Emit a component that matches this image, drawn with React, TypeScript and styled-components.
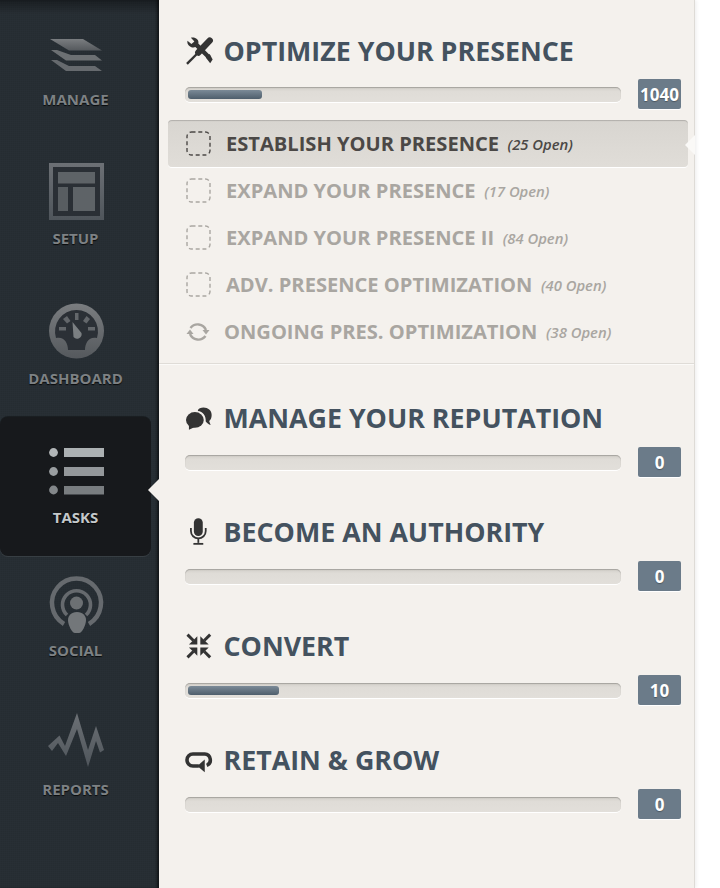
import React from "react";
import styled, { createGlobalStyle } from "styled-components";

const GlobalStyle = createGlobalStyle`
  html, body {
    margin: 0;
    padding: 0;
    background: #ffffff;
  }
  body {
    font-family: "Open Sans", "Liberation Sans", sans-serif;
  }
`;

const Page = styled.div`
  display: flex;
  width: 720px;
  height: 888px;
  overflow: hidden;
  background: #ffffff;
`;

const Sidebar = styled.nav`
  display: flex;
  flex-direction: column;
  flex: 0 0 159px;
  box-sizing: border-box;
  padding-right: 8px;
  background-color: #272e34;
  background-image:
    linear-gradient(rgba(0, 0, 0, 0.35), transparent 14px),
    repeating-linear-gradient(0deg, rgba(0, 0, 0, 0.05) 0 1px, transparent 1px 2px),
    repeating-linear-gradient(90deg, rgba(255, 255, 255, 0.008) 0 1px, transparent 1px 2px);
  box-shadow: inset -3px 0 3px -1px rgba(0, 0, 0, 0.55);
`;

type NavItemProps = {
  $height: number;
  $active?: boolean;
};

const NavItem = styled.a<NavItemProps>`
  position: relative;
  display: flex;
  flex-direction: column;
  align-items: center;
  justify-content: flex-end;
  box-sizing: border-box;
  height: ${(props) => props.$height}px;
  padding: 0 0 31px;
  gap: 1px;
  border-radius: 8px;
  background: ${(props) => (props.$active ? "#17191c" : "transparent")};
  box-shadow: ${(props) =>
    props.$active ? "0 1px 0 rgba(255,255,255,0.08), 0 -1px 0 rgba(0,0,0,0.35)" : "none"};
`;

const NavIcon = styled.svg`
  display: block;
  width: 80px;
  height: 72px;
`;

type NavLabelProps = {
  $active?: boolean;
};

const NavLabel = styled.span<NavLabelProps>`
  font-size: 15px;
  line-height: 16px;
  font-weight: 700;
  color: ${(props) => (props.$active ? "#c4c8ca" : "#7d8184")};
  text-shadow: 0 1px 1px rgba(0, 0, 0, 0.8);
`;

const NavPointer = styled.span`
  position: absolute;
  right: -8px;
  top: 62px;
  width: 0;
  height: 0;
  border-top: 11px solid transparent;
  border-bottom: 11px solid transparent;
  border-right: 11px solid #f4f1ed;
`;

const Main = styled.main`
  flex: 0 0 536px;
  box-sizing: border-box;
  background: #f4f1ed;
  border-right: 1px solid #dedbd6;
  box-shadow: 1px 0 4px rgba(0, 0, 0, 0.08);
`;

type SectionProps = {
  $top: number;
  $bottom: number;
  $divided?: boolean;
};

const Section = styled.section<SectionProps>`
  padding: ${(props) => props.$top}px 13px ${(props) => props.$bottom}px 26px;
  border-bottom: ${(props) => (props.$divided ? "1px solid #dfdcd7" : "none")};
  box-shadow: ${(props) => (props.$divided ? "0 1px 0 #fbfaf8" : "none")};
`;

const Heading = styled.h2`
  display: flex;
  align-items: center;
  height: 34px;
  margin: 0;
  font-size: 26.8px;
  line-height: 34px;
  font-weight: 700;
  color: #44525f;
`;

const HeadingIcon = styled.svg`
  flex: 0 0 38.5px;
  width: 38.5px;
  height: 34px;
  color: #333333;
`;

type ProgressRowProps = {
  $gap: number;
};

const ProgressRow = styled.div<ProgressRowProps>`
  display: flex;
  align-items: center;
  justify-content: space-between;
  margin-top: ${(props) => props.$gap}px;
`;

const Track = styled.div`
  display: flex;
  align-items: center;
  box-sizing: border-box;
  width: 436px;
  height: 15px;
  margin-top: 1px;
  padding: 0 3px;
  border-radius: 5px;
  background: linear-gradient(#d2cfc9, #dfdcd7 30%, #e2dfda);
  box-shadow: inset 0 1px 1px rgba(0, 0, 0, 0.22), 0 1px 0 #ffffff;
`;

const Fill = styled.div`
  height: 9px;
  border-radius: 3px;
  background: linear-gradient(#7b8a97, #4e5e6c);
`;

const Badge = styled.div`
  display: flex;
  align-items: center;
  justify-content: center;
  width: 43px;
  height: 30px;
  border-radius: 2px;
  background: #6b7b89;
  box-shadow: 0 1px 0 #ffffff;
  font-size: 17px;
  font-weight: 700;
  color: #ffffff;
  text-shadow: 0 1px 1px rgba(0, 0, 0, 0.3);
`;

const TaskList = styled.ul`
  list-style: none;
  margin: 11px -7px 0 -17px;
  padding: 0;
`;

type TaskRowProps = {
  $active?: boolean;
};

const TaskRow = styled.li<TaskRowProps>`
  position: relative;
  display: flex;
  align-items: center;
  box-sizing: border-box;
  height: 47px;
  padding-left: 18px;
  border-radius: 4px;
  color: ${(props) => (props.$active ? "#4b4846" : "#a9a6a1")};
  background: ${(props) => (props.$active ? "linear-gradient(#d8d5d0, #e0ddd8)" : "transparent")};
  box-shadow: ${(props) =>
    props.$active ? "inset 0 2px 1px -1px rgba(0,0,0,0.18), 0 1px 0 #ffffff" : "none"};
`;

const DashedBox = styled.svg`
  flex: 0 0 25px;
  width: 25px;
  height: 25px;
  margin-right: 15px;
`;

const SyncIcon = styled.svg`
  flex: 0 0 24px;
  width: 24px;
  height: 24px;
  margin-right: 14px;
  color: #a9a6a1;
`;

const TaskName = styled.span`
  font-size: 20.1px;
  font-weight: 700;
  white-space: nowrap;
`;

const TaskCount = styled.em`
  margin-left: 8.5px;
  font-size: 14.8px;
  font-weight: 600;
  font-style: italic;
  white-space: nowrap;
`;

const RowPointer = styled.span`
  position: absolute;
  right: -7px;
  top: 15px;
  width: 0;
  height: 0;
  border-top: 10px solid transparent;
  border-bottom: 10px solid transparent;
  border-right: 10px solid #faf9f7;
`;

const Gradients = () => (
  <svg width="0" height="0" style={{ position: "absolute" }}>
    <defs>
      <linearGradient id="navGrey" x1="0" y1="0" x2="0" y2="1">
        <stop offset="0" stopColor="#7a7d80" />
        <stop offset="1" stopColor="#55595d" />
      </linearGradient>
      <linearGradient id="navSlate" x1="0" y1="0" x2="0" y2="1">
        <stop offset="0" stopColor="#6c7075" />
        <stop offset="1" stopColor="#4f555b" />
      </linearGradient>
    </defs>
  </svg>
);

const ManageIcon = () => (
  <NavIcon viewBox="35 18 80 72">
    <path d="M50 60 L65 71 H101 L94 66 H68 L56 60 Z" fill="#666a6e" />
    <path d="M50 50 L65 60.5 H101 L94 55 H70 L56 50 Z" fill="#6c7073" />
    <path d="M49 39 H82 L101 50.5 H68 Z" fill="url(#navGrey)" />
  </NavIcon>
);

const SetupIcon = () => (
  <NavIcon viewBox="35 157 80 72">
    <rect x="48" y="163" width="55" height="57" fill="url(#navSlate)" />
    <rect x="52" y="167" width="47" height="49" fill="#2a2f35" />
    <rect x="57" y="172" width="37" height="11.5" fill="#5e6367" />
    <rect x="57" y="187" width="10" height="24" fill="#585d61" />
    <rect x="72" y="187" width="22" height="24" fill="#5e6367" />
  </NavIcon>
);

const DashboardIcon = () => (
  <NavIcon viewBox="35 297 80 72">
    <circle cx="75.5" cy="331" r="27.5" fill="url(#navGrey)" />
    <path
      d="M55 338 A21.5 21.5 0 1 1 96 338 C 88 336 84 343 84 350 H67 C67 343 63 336 55 338 Z"
      fill="#2b3036"
    />
    <rect x="58" y="327" width="7" height="3.5" fill="#63676b" />
    <rect x="87" y="327" width="7" height="3.5" fill="#63676b" />
    <path d="M62 319 L66 316 L69.5 321 L66 323.5 Z" fill="#63676b" />
    <path d="M89 319 L85.5 316 L82 321 L85.5 323.5 Z" fill="#63676b" />
    <rect x="74" y="313" width="3.5" height="7" fill="#63676b" />
    <path d="M71.5 322 L80.5 333 A4.6 4.6 0 0 1 72.5 337 Z" fill="#7b7f82" />
  </NavIcon>
);

const TasksIcon = () => (
  <NavIcon viewBox="35 436 80 72">
    <circle cx="52.5" cy="452.5" r="4.4" fill="#b2b6b8" />
    <circle cx="52.5" cy="471.5" r="4.4" fill="#9a9ea1" />
    <circle cx="52.5" cy="490" r="4.4" fill="#83878a" />
    <rect x="63" y="448" width="40" height="9" fill="#acb1b3" />
    <rect x="63" y="467" width="40" height="9" fill="#94989b" />
    <rect x="63" y="486" width="40" height="8.5" fill="#797d80" />
  </NavIcon>
);

const SocialIcon = () => (
  <NavIcon viewBox="35 569 80 72">
    <path d="M63 624 A24.5 24.5 0 1 1 88 624" fill="none" stroke="#666a6e" strokeWidth="4.5" />
    <path d="M66 615 A14 14 0 1 1 85 615" fill="none" stroke="#666a6e" strokeWidth="3.6" />
    <circle cx="75.5" cy="603" r="6.5" fill="#6c7073" />
    <path d="M76 612 C82 612 85 616 85 620 C85 625 81 633 78 633 H74 C71 633 67 625 67 620 C67 616 70 612 76 612 Z" fill="#73777a" />
  </NavIcon>
);

const ReportsIcon = () => (
  <NavIcon viewBox="35 708 80 72">
    <path
      d="M47 746 L58.5 735.5 L64 746 L76 713 L87 750 L95 726 L103 750 L99 752.5 L95 741 L87 767 L76 729 L65 756 L57 743 L51 751 Z"
      fill="url(#navSlate)"
    />
  </NavIcon>
);

const ToolsIcon = () => (
  <HeadingIcon viewBox="0 0 39 34">
    <path d="M2 30 L14 18" stroke="currentColor" strokeWidth="2.4" />
    <path d="M13.5 18.5 L25 6.5" stroke="currentColor" strokeWidth="6.5" strokeLinecap="round" />
    <path
      d="M2.5 6.5 L6.5 10 L9.5 7.5 L6 3.5 C10 2.5 14.5 5 13.5 9.5 L26 22 L23 25 L10.5 13 C6.5 14.5 1.5 11 2.5 6.5 Z"
      fill="currentColor"
    />
    <path d="M21 23.5 L25 20 L28 25.5 L25.5 29.5 Z" fill="currentColor" />
  </HeadingIcon>
);

const ChatIcon = () => (
  <HeadingIcon viewBox="0 0 39 34">
    <path
      d="M15 7 C21 5 27 8 27 14 C27 17 26 19 24.5 20 C25 21.5 25.5 23 26 24 C24 23.5 22 22 21 20.5 C21.5 15 18 10.5 13 10 C13 8.5 14 7.5 15 7 Z"
      fill="currentColor"
    />
    <ellipse cx="10" cy="19" rx="9" ry="8" fill="currentColor" />
    <path d="M4 23 L4 29 L10 26 Z" fill="currentColor" />
  </HeadingIcon>
);

const MicIcon = () => (
  <HeadingIcon viewBox="0 0 39 34">
    <rect x="9" y="3" width="9" height="18" rx="4.5" fill="currentColor" />
    <path d="M6 13 V16 A7.5 7.5 0 0 0 21 16 V13" fill="none" stroke="currentColor" strokeWidth="1.8" />
    <path d="M13.5 23 V28" stroke="currentColor" strokeWidth="1.8" />
    <path d="M8.5 29 H18.5" stroke="currentColor" strokeWidth="1.8" />
  </HeadingIcon>
);

const ArrowInCorner = () => (
  <g>
    <path d="M12 12 V3.5 L3.5 12 Z" fill="currentColor" />
    <path d="M2 2 L8 8" stroke="currentColor" strokeWidth="3" />
  </g>
);

const ConvertIcon = () => (
  <HeadingIcon viewBox="0 0 39 34">
    <g transform="translate(0.5 3.5)">
      <ArrowInCorner />
      <g transform="translate(27 0) scale(-1 1)">
        <ArrowInCorner />
      </g>
      <g transform="translate(0 27) scale(1 -1)">
        <ArrowInCorner />
      </g>
      <g transform="translate(27 27) scale(-1 -1)">
        <ArrowInCorner />
      </g>
    </g>
  </HeadingIcon>
);

const LoopIcon = () => (
  <HeadingIcon viewBox="0 0 39 34">
    <path
      d="M14 23 H8 A6 6 0 0 1 8 11 H20 A6 6 0 0 1 22 22.5"
      fill="none"
      stroke="currentColor"
      strokeWidth="3.6"
    />
    <path d="M12.5 23 L20 16.5 V29.5 Z" fill="currentColor" />
  </HeadingIcon>
);

const DashedSquare = () => (
  <DashedBox viewBox="0 0 25 25">
    <rect
      x="1"
      y="1"
      width="23"
      height="23"
      rx="4.5"
      fill="none"
      stroke="currentColor"
      strokeWidth="1.4"
      strokeDasharray="4 2.8"
    />
  </DashedBox>
);

const SyncGlyph = () => (
  <SyncIcon viewBox="0 0 24 24">
    <path d="M4.5 8 A9 9 0 0 1 20 10" fill="none" stroke="currentColor" strokeWidth="2.4" />
    <path d="M19.5 16 A9 9 0 0 1 4 14" fill="none" stroke="currentColor" strokeWidth="2.4" />
    <path d="M16.5 10 H23.5 L20 14.5 Z" fill="currentColor" />
    <path d="M0.5 14 H7.5 L4 9.5 Z" fill="currentColor" />
  </SyncIcon>
);

const navItems = [
  { label: "MANAGE", height: 138, icon: <ManageIcon /> },
  { label: "SETUP", height: 139, icon: <SetupIcon /> },
  { label: "DASHBOARD", height: 140, icon: <DashboardIcon /> },
  { label: "TASKS", height: 139, icon: <TasksIcon />, active: true },
  { label: "SOCIAL", height: 133, icon: <SocialIcon /> },
  { label: "REPORTS", height: 139, icon: <ReportsIcon /> },
];

const tasks = [
  { name: "ESTABLISH YOUR PRESENCE", count: "(25 Open)", active: true },
  { name: "EXPAND YOUR PRESENCE", count: "(17 Open)" },
  { name: "EXPAND YOUR PRESENCE II", count: "(84 Open)" },
  { name: "ADV. PRESENCE OPTIMIZATION", count: "(40 Open)" },
  { name: "ONGOING PRES. OPTIMIZATION", count: "(38 Open)", sync: true },
];

const lowerSections = [
  { title: "MANAGE YOUR REPUTATION", icon: <ChatIcon />, value: "0", fill: 0 },
  { title: "BECOME AN AUTHORITY", icon: <MicIcon />, value: "0", fill: 0 },
  { title: "CONVERT", icon: <ConvertIcon />, value: "10", fill: 91 },
  { title: "RETAIN & GROW", icon: <LoopIcon />, value: "0", fill: 0 },
];

const Progress = ({ fill, value, gap }: { fill: number; value: string; gap: number }) => (
  <ProgressRow $gap={gap}>
    <Track>{fill > 0 && <Fill style={{ width: fill }} />}</Track>
    <Badge>{value}</Badge>
  </ProgressRow>
);

export default function App() {
  return (
    <Page>
      <GlobalStyle />
      <Gradients />
      <Sidebar>
        {navItems.map((item) => (
          <NavItem key={item.label} $height={item.height} $active={item.active}>
            {item.icon}
            <NavLabel $active={item.active}>{item.label}</NavLabel>
            {item.active && <NavPointer />}
          </NavItem>
        ))}
      </Sidebar>
      <Main>
        <Section $top={34} $bottom={8} $divided>
          <Heading>
            <ToolsIcon />
            OPTIMIZE YOUR PRESENCE
          </Heading>
          <Progress fill={74} value="1040" gap={11} />
          <TaskList>
            {tasks.map((task) => (
              <TaskRow key={task.name} $active={task.active}>
                {task.sync ? <SyncGlyph /> : <DashedSquare />}
                <TaskName>{task.name}</TaskName>
                <TaskCount>{task.count}</TaskCount>
                {task.active && <RowPointer />}
              </TaskRow>
            ))}
          </TaskList>
        </Section>
        {lowerSections.map((section, index) => (
          <Section key={section.title} $top={index === 0 ? 37 : 38} $bottom={0}>
            <Heading>
              {section.icon}
              {section.title}
            </Heading>
            <Progress fill={section.fill} value={section.value} gap={12} />
          </Section>
        ))}
      </Main>
    </Page>
  );
}
